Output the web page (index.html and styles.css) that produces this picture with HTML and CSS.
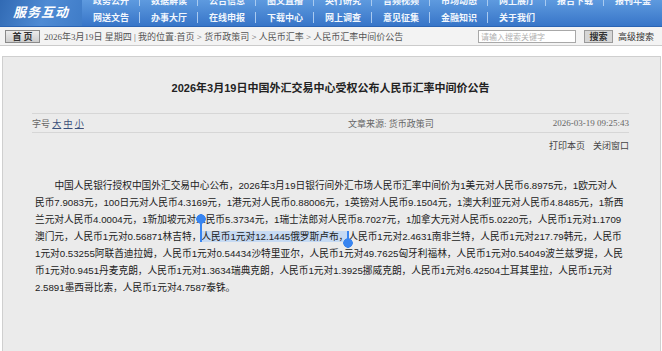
FILE: index.html
```html
<!DOCTYPE html>
<html lang="zh-CN">
<head>
  <meta charset="UTF-8" />
  <title>2026年3月19日中国外汇交易中心受权公布人民币汇率中间价公告</title>
  <link rel="stylesheet" href="styles.css">
</head>
<body>
  <div class="header">
    <div class="brand">服务互动</div>
    <div class="nav">
      <a>政务公开</a><a>数据解读</a><a>公告信息</a><a>图文直播</a><a>央行研究</a>
      <a>音频视频</a><a>市场动态</a><a>网上展厅</a><a>报告下载</a><a>报刊年鉴</a>
      <a>网送文告</a><a>办事大厅</a><a>在线申报</a><a>下载中心</a><a>网上调查</a>
      <a>意见征集</a><a>金融知识</a><a>关于我们</a><span></span><span></span>
    </div>
  </div>

  <div class="crumbs">
    <button class="home-btn">首 页</button>
    <div class="path">2026年3月19日 星期四 | 我的位置:首页 &gt; 货币政策司 &gt; 人民币汇率 &gt; 人民币汇率中间价公告</div>
    <div class="search">
      <input type="text" placeholder="请输入搜索关键字" />
      <button>搜索</button>
      <a>高级搜索</a>
    </div>
  </div>

  <div class="article">
    <h1 class="title">2026年3月19日中国外汇交易中心受权公布人民币汇率中间价公告</h1>

    <div class="meta">
      <div class="size">字号 <a>大</a> <a>中</a> <a>小</a></div>
      <div class="source">文章来源: 货币政策司</div>
      <div class="date">2026-03-19 09:25:43</div>
    </div>

    <div class="tools">
      <a>打印本页</a>
      <a>关闭窗口</a>
    </div>

    <p class="text">中国人民银行授权中国外汇交易中心公布，2026年3月19日银行间外汇市场人民币汇率中间价为1美元对人民币6.8975元，1欧元对人民币7.9083元，100日元对人民币4.3169元，1港元对人民币0.88006元，1英镑对人民币9.1504元，1澳大利亚元对人民币4.8485元，1新西兰元对人民币4.0004元，1新加坡元对人民币5.3734元，1瑞士法郎对人民币8.7027元，1加拿大元对人民币5.0220元，人民币1元对1.1709澳门元，人民币1元对0.56871林吉特，<span class="sel">人民币1元对12.1445俄罗斯卢布，</span>人民币1元对2.4631南非兰特，人民币1元对217.79韩元，人民币1元对0.53255阿联酋迪拉姆，人民币1元对0.54434沙特里亚尔，人民币1元对49.7625匈牙利福林，人民币1元对0.54049波兰兹罗提，人民币1元对0.9451丹麦克朗，人民币1元对1.3634瑞典克朗，人民币1元对1.3925挪威克朗，人民币1元对6.42504土耳其里拉，人民币1元对2.5891墨西哥比索，人民币1元对4.7587泰铢。</p>
  </div>
</body>
</html>
```

FILE: styles.css
```css
body {
  margin: 0;
  background: #fff;
  color: #333;
  font-family: "Liberation Sans", "Noto Sans CJK SC", sans-serif;
}

a {
  cursor: pointer;
}

/* top blue bar, page is scrolled a little so row one is cut */
.header {
  display: flex;
  height: 34px;
  margin-top: -8px;
  background: linear-gradient(#6aa6e6, #3775c8);
  border-bottom: 1px solid #2a64b4;
}

.brand {
  width: 82px;
  flex: none;
  display: flex;
  align-items: center;
  justify-content: center;
  padding-top: 4px;
  box-sizing: border-box;
  color: #fff;
  font-size: 13px;
  font-weight: bold;
  font-style: italic;
  letter-spacing: 1px;
  background: linear-gradient(110deg, #2f68b2 0%, #4f8bd4 55%, #3f7cc8 100%);
}

.nav {
  flex: 1;
  display: grid;
  grid-template-columns: repeat(10, 1fr);
  grid-template-rows: 17px 17px;
}

.nav a,
.nav span {
  display: flex;
  align-items: center;
  justify-content: center;
  color: #f2f7fd;
  font-size: 9px;
  font-weight: bold;
  position: relative;
}

.nav a::after {
  content: "";
  position: absolute;
  right: 0;
  top: 3px;
  bottom: 3px;
  width: 1px;
  background: #a9caf0;
}

.nav a:nth-child(10)::after,
.nav a:nth-child(18)::after {
  display: none;
}

.crumbs {
  display: flex;
  align-items: center;
  height: 18px;
  padding: 0 8px 0 5px;
  background: #f3f3f3;
  border-bottom: 1px solid #cbcbcb;
  font-family: "Liberation Serif", "Noto Sans CJK SC", serif;
  font-size: 9px;
  color: #555;
}

.home-btn {
  height: 13px;
  width: 35px;
  padding: 0;
  margin-right: 4px;
  border: 1px solid #8a8a8a;
  background: linear-gradient(#ececec, #cdcdcd);
  font-family: "Noto Sans CJK SC", sans-serif;
  font-size: 9px;
  font-weight: bold;
  color: #333;
  line-height: 11px;
}

.path {
  flex: 1;
  white-space: nowrap;
}

.search {
  display: flex;
  align-items: center;
  font-family: "Noto Sans CJK SC", sans-serif;
}

.search input {
  width: 92px;
  height: 11px;
  padding: 0 2px;
  margin-right: 8px;
  border: 1px solid #a8a8a8;
  font-size: 8px;
  font-family: "Noto Sans CJK SC", sans-serif;
}

.search input::placeholder {
  color: #b0b0b0;
}

.search button {
  width: 29px;
  height: 13px;
  padding: 0;
  margin-right: 5px;
  border: 1px solid #9a9a9a;
  background: #d6d6d6;
  font-family: "Noto Sans CJK SC", sans-serif;
  font-size: 9px;
  font-weight: bold;
  color: #333;
  line-height: 11px;
}

.search a {
  font-size: 9px;
  color: #333;
}

.article {
  margin: 10px 1px 0 2px;
  padding: 23px 31px 60px 29px;
  background: #ebebeb;
  border: 1px solid #cfcfcf;
  border-bottom: none;
}

.title {
  margin: 0;
  text-align: center;
  font-size: 11px;
  line-height: 16px;
  color: #222;
}

.meta {
  display: flex;
  justify-content: space-between;
  align-items: center;
  height: 18px;
  margin-top: 17px;
  border-top: 1px solid #d6d6d6;
  border-bottom: 1px solid #d6d6d6;
  font-family: "Liberation Serif", "Noto Sans CJK SC", serif;
  font-size: 9px;
  color: #666;
}

.meta .size a {
  color: #3a4f7a;
  text-decoration: underline;
}

.meta .source {
  margin-left: 145px;
}

.tools {
  display: flex;
  justify-content: flex-end;
  gap: 8px;
  margin-top: 6px;
  font-size: 9px;
  line-height: 14px;
}

.tools a {
  color: #444;
}

.text {
  margin: 24px 3px 0;
  font-size: 9.7px;
  line-height: 17px;
  text-indent: 2em;
  color: #222;
}

/* text selection shown on the screenshot */
.sel {
  position: relative;
  background: #c6daf3;
}

.sel::before,
.sel::after {
  content: "";
  position: absolute;
  width: 10px;
  text-indent: 0;
}

.sel::before {
  left: -5px;
  top: -17px;
  height: calc(100% + 17px);
  background:
    radial-gradient(circle at 5px 5px, #3985f0 4.5px, transparent 5px),
    linear-gradient(#3985f0, #3985f0) 4px 0 / 2px 100% no-repeat;
}

.sel::after {
  right: -5px;
  top: 0;
  height: calc(100% + 6px);
  background:
    radial-gradient(circle at 5px calc(100% - 5px), #3985f0 4.5px, transparent 5px),
    linear-gradient(#3985f0, #3985f0) 4px 0 / 2px 100% no-repeat;
}
```
